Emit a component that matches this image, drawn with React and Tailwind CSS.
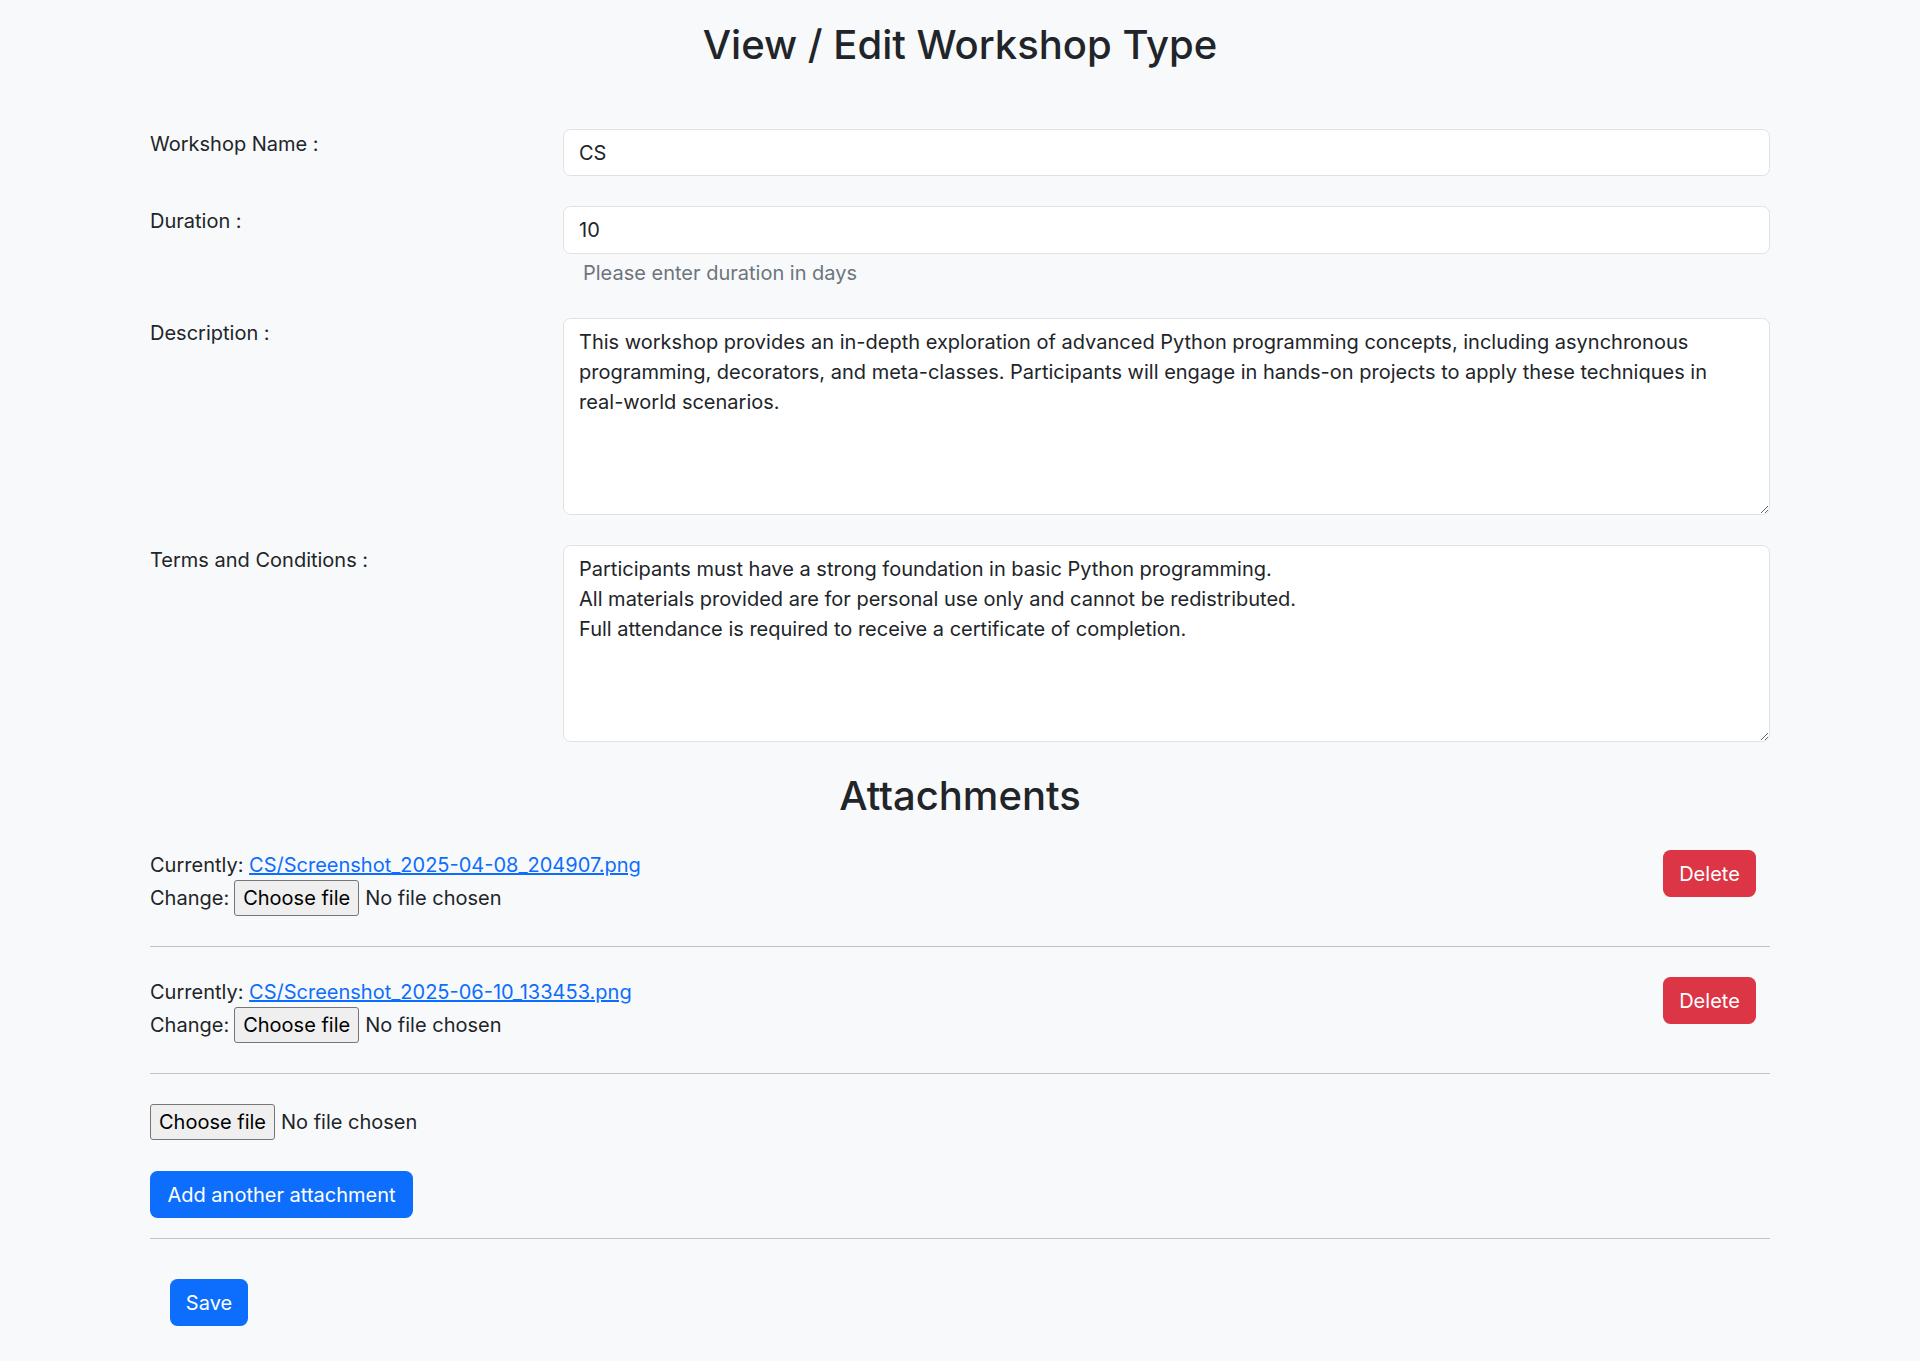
import React from 'react';

const description =
  'This workshop provides an in-depth exploration of advanced Python programming concepts, including asynchronous programming, decorators, and meta-classes. Participants will engage in hands-on projects to apply these techniques in real-world scenarios.';

const terms =
  'Participants must have a strong foundation in basic Python programming.\nAll materials provided are for personal use only and cannot be redistributed.\nFull attendance is required to receive a certificate of completion.';

const attachments = [
  'CS/Screenshot_2025-04-08_204907.png',
  'CS/Screenshot_2025-06-10_133453.png',
];

const FileInput = () => (
  <span className="inline-flex items-center">
    <span className="h-[36px] w-[125px] flex items-center justify-center bg-[#efefef] border border-[#767676] rounded-[3px] text-black">
      Choose file
    </span>
    <span className="ml-[6px]">No file chosen</span>
  </span>
);

const Row = ({ label, children }) => (
  <div className="flex items-start mb-[30px]">
    <label className="w-[413px] shrink-0">{label}</label>
    <div className="flex-1 min-w-0">{children}</div>
  </div>
);

const Divider = () => <div className="h-px bg-[#c3c4c5]" />;

export default function App() {
  return (
    <div className="min-h-screen bg-[#f8f9fa] text-[#212529] font-[Inter,sans-serif] text-[20px] leading-[30px]">
      <div className="w-[1620px] mx-auto">
        <h2 className="pt-[21px] mb-[59.5px] text-[40px] leading-[48px] font-medium text-center">
          View / Edit Workshop Type
        </h2>

        <form onSubmit={(e) => e.preventDefault()}>
          <Row label="Workshop Name :">
            <input
              type="text"
              defaultValue="CS"
              className="w-full h-[47.5px] px-[15px] pt-[1px] bg-white border border-[#dee2e6] rounded-[7.5px] outline-none"
            />
          </Row>

          <div className="flex items-start mb-[30px]">
            <label className="w-[413px] shrink-0">Duration :</label>
            <div className="flex-1 min-w-0">
              <input
                type="text"
                defaultValue="10"
                className="w-full h-[47.5px] px-[15px] pt-[1px] bg-white border border-[#dee2e6] rounded-[7.5px] outline-none"
              />
              <div className="mt-[4px] pl-[20px] text-[#6c757d]">Please enter duration in days</div>
            </div>
          </div>

          <Row label="Description :">
            <textarea
              defaultValue={description}
              className="block w-full h-[197px] px-[15px] pt-[8.5px] pb-[7.5px] bg-white border border-[#dee2e6] rounded-[7.5px] outline-none"
            />
          </Row>

          <Row label="Terms and Conditions :">
            <textarea
              defaultValue={terms}
              className="block w-full h-[197px] px-[15px] pt-[8.5px] pb-[7.5px] bg-white border border-[#dee2e6] rounded-[7.5px] outline-none"
            />
          </Row>

          <h2 className="text-[40px] leading-[48px] font-medium text-center mb-[30px]">Attachments</h2>

          {attachments.map((file) => (
            <div key={file}>
              <div className="flex justify-between items-start">
                <div>
                  <div className="h-[30px]">
                    Currently:{' '}
                    <a href="#" className="text-[#0d6efd] underline">
                      {file}
                    </a>
                  </div>
                  <div className="flex items-center h-[37px]">
                    <span className="mr-[5px]">Change:</span>
                    <FileInput />
                  </div>
                </div>
                <button
                  type="button"
                  className="mr-[14px] h-[47px] w-[93px] pt-[1px] rounded-[7.5px] bg-[#dc3545] text-white"
                >
                  Delete
                </button>
              </div>
              <div className="my-[29.5px]">
                <Divider />
              </div>
            </div>
          ))}

          <div className="flex items-center h-[37px]">
            <FileInput />
          </div>

          <button
            type="button"
            className="mt-[30px] h-[47px] w-[263px] pt-[1px] rounded-[7.5px] bg-[#0d6efd] text-white"
          >
            Add another attachment
          </button>

          <div className="mt-[20.5px] mb-[40px]">
            <Divider />
          </div>

          <div className="pl-[20px] pb-[34px]">
            <button type="submit" className="h-[47px] w-[78px] pt-[1px] rounded-[7.5px] bg-[#0d6efd] text-white">
              Save
            </button>
          </div>
        </form>
      </div>
    </div>
  );
}
